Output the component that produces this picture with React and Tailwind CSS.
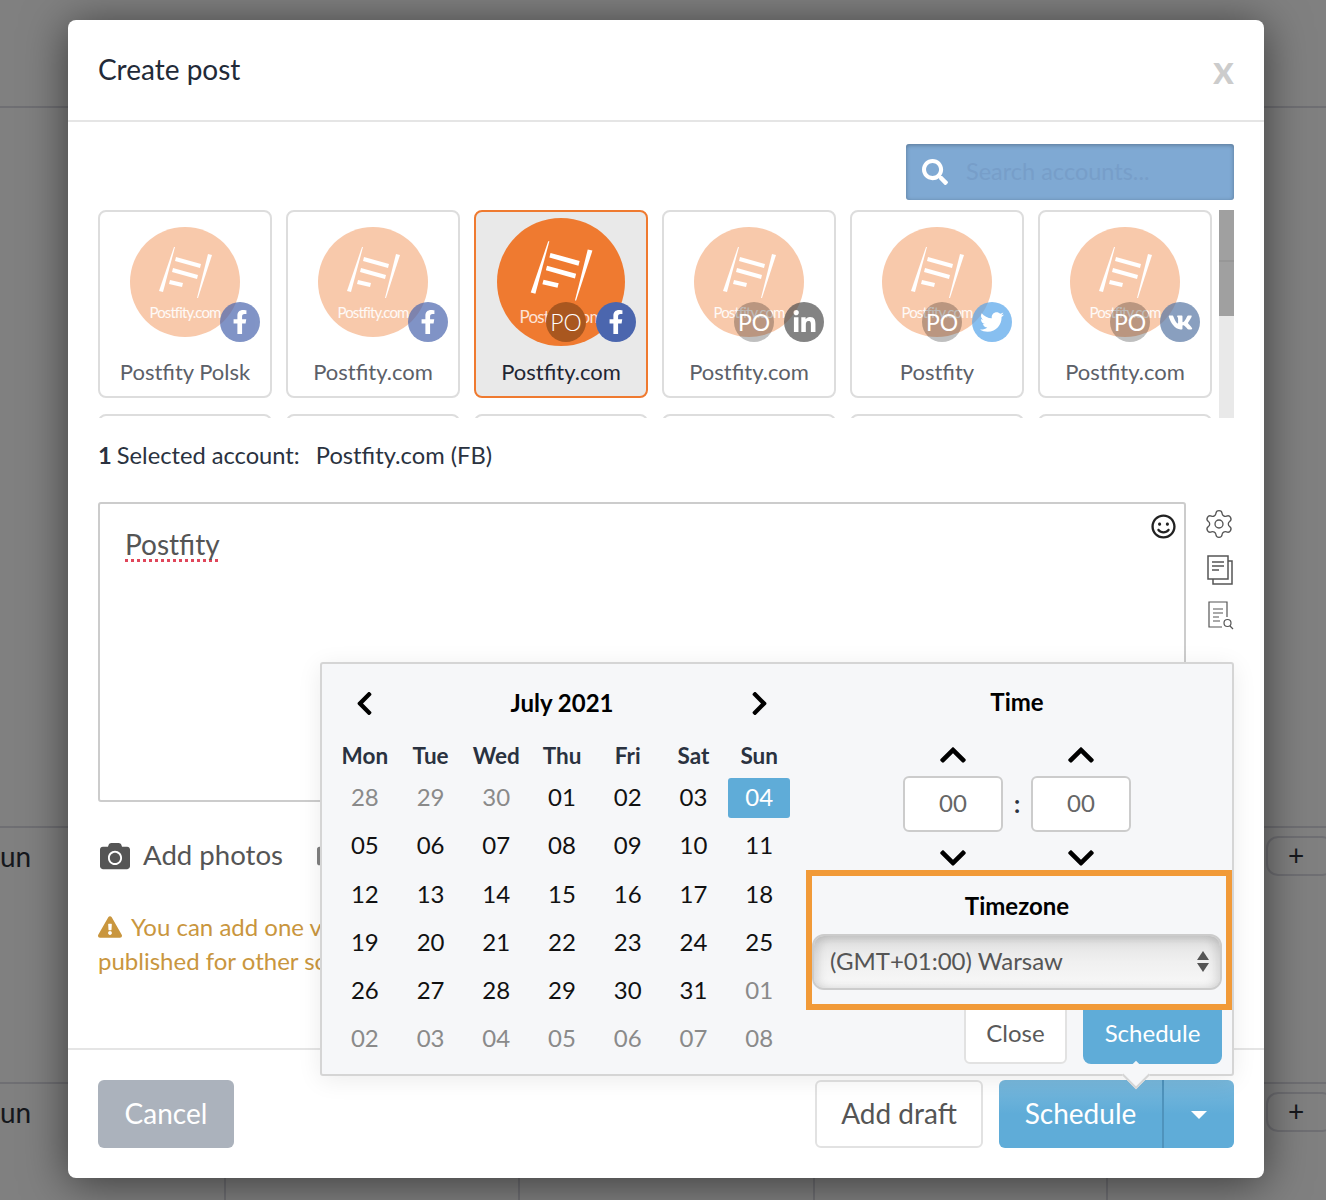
import { FaCamera, FaChevronDown, FaChevronLeft, FaChevronRight, FaChevronUp, FaExclamationTriangle, FaFacebookF, FaLinkedinIn, FaRegSmile, FaSearch, FaTwitter, FaVideo, FaVk } from "react-icons/fa";
import { Settings } from "lucide-react";

const accounts = [
  { name: "Postfity Polsk", net: "fb" },
  { name: "Postfity.com", net: "fb" },
  { name: "Postfity.com", net: "fb", po: true, selected: true },
  { name: "Postfity.com", net: "in", po: true },
  { name: "Postfity", net: "tw", po: true },
  { name: "Postfity.com", net: "vk", po: true },
];

const networks = {
  fb: { Icon: FaFacebookF, bg: "bg-[#4b66ae]", size: 24 },
  in: { Icon: FaLinkedinIn, bg: "bg-[#505050]", size: 25 },
  tw: { Icon: FaTwitter, bg: "bg-[#55a4ea]", size: 24 },
  vk: { Icon: FaVk, bg: "bg-[#5877a4]", size: 25 },
};

const weeks = [
  ["28", "29", "30", "01", "02", "03", "04"],
  ["05", "06", "07", "08", "09", "10", "11"],
  ["12", "13", "14", "15", "16", "17", "18"],
  ["19", "20", "21", "22", "23", "24", "25"],
  ["26", "27", "28", "29", "30", "31", "01"],
  ["02", "03", "04", "05", "06", "07", "08"],
];

const isMuted = (row, col) => (row === 0 && col < 3) || (row === 4 && col === 6) || row === 5;

const Ladder = () => (
  <svg viewBox="0 0 110 110" className="absolute inset-0 h-full w-full" fill="#fff">
    <polygon points="29,64 33,65 45,20 44,20" />
    <polygon points="67,71 68,71 82,28 78,27" />
    <polygon points="46,30 71,37 70,41 45,34" />
    <polygon points="43,41 68,48 67,52 42,45" />
    <polygon points="40,53 53,56 52,60 39,57" />
  </svg>
);

const Avatar = ({ selected }) => (
  <div className={selected ? "relative h-[128px] w-[128px] overflow-hidden rounded-full bg-[#ef7a30]" : "relative mt-[15px] h-[110px] w-[110px] overflow-hidden rounded-full bg-[#ef7a30] opacity-40"}>
    <Ladder />
    <span className={selected ? "absolute inset-x-0 top-[89px] text-center text-[17px] leading-5 tracking-[-0.8px] text-white/80" : "absolute inset-x-0 top-[75px] text-center text-[15px] leading-5 tracking-[-0.9px] text-white/90"}>
      Postfity.com
    </span>
  </div>
);

const AccountCard = ({ account }) => {
  const { Icon, bg, size } = networks[account.net];
  return (
    <div className={account.selected ? "flex h-[188px] w-[174px] flex-col items-center rounded-lg border-2 border-[#ef7a30] bg-[#e9e9e9]" : "flex h-[188px] w-[174px] flex-col items-center rounded-lg border-2 border-[#dddddd] bg-white"}>
      <div className={account.selected ? "relative flex h-[146px] w-full justify-center pt-[6px]" : "relative flex h-[146px] w-full justify-center"}>
        <Avatar selected={account.selected} />
        {account.po && (
          <span className={account.selected ? "absolute left-[70px] top-[90px] flex h-10 w-10 items-center justify-center rounded-full bg-[#a9571f] text-[23px] font-light text-white" : "absolute left-[70px] top-[90px] flex h-10 w-10 items-center justify-center rounded-full bg-black/25 text-[23px] text-white"}>
            PO
          </span>
        )}
        <span className={account.selected ? `absolute left-[120px] top-[90px] flex h-10 w-10 items-center justify-center rounded-full text-white ${bg}` : `absolute left-[120px] top-[90px] flex h-10 w-10 items-center justify-center rounded-full text-white opacity-70 ${bg}`}>
          <Icon size={size} />
        </span>
      </div>
      <div className={account.selected ? "text-[22px] leading-7 text-[#1f2633]" : "text-[22px] leading-7 text-[#5c6068]"}>{account.name}</div>
    </div>
  );
};

const BackdropRow = ({ height, text }) => (
  <div className={`flex border-t-2 border-[#6f6f73] ${height}`}>
    <div className="w-[226px] border-r-2 border-[#6f6f73] pt-[10px] text-[28px] leading-9 text-[#15171c]">{text}</div>
    <div className="w-[294px] border-r-2 border-[#6f6f73]" />
    <div className="w-[295px] border-r-2 border-[#6f6f73]" />
    <div className="w-[293px] border-r-2 border-[#6f6f73]" />
    <div className="flex flex-1 justify-end pt-[8px]">
      <div className="mr-[-8px] flex h-10 w-[68px] items-center justify-center rounded-xl border-2 border-[#6f6f73] pb-[2px] pr-[8px] text-[28px] text-[#15171c]">+</div>
    </div>
  </div>
);

const Calendar = () => (
  <div className="ml-[10px] w-[460px]">
    <div className="grid h-[78px] grid-cols-7 items-center text-black">
      <div className="flex justify-center"><FaChevronLeft size={27} /></div>
      <div className="col-span-5 text-center text-2xl font-bold">July 2021</div>
      <div className="flex justify-center"><FaChevronRight size={27} /></div>
    </div>
    <div className="grid h-8 grid-cols-7 items-start pt-px text-center text-[22.5px] font-bold leading-[26px] text-[#2a3240]">
      {["Mon", "Tue", "Wed", "Thu", "Fri", "Sat", "Sun"].map((day) => (
        <div key={day}>{day}</div>
      ))}
    </div>
    {weeks.map((week, row) => (
      <div key={row} className="grid h-[48.3px] grid-cols-7 items-start text-center text-2xl">
        {week.map((date, col) => (
          <div key={col} className={row === 0 && col === 6 ? "mx-auto mt-[4px] flex h-10 w-[62px] items-center justify-center rounded-[3px] bg-[#5facd8] pb-[2px] text-white" : isMuted(row, col) ? "mt-[4px] flex h-10 items-center justify-center pb-[2px] text-[#8a8a8a]" : "mt-[4px] flex h-10 items-center justify-center pb-[2px] text-[#111111]"}>
            {date}
          </div>
        ))}
      </div>
    ))}
  </div>
);

const TimeBox = () => (
  <div className="flex h-14 w-[100px] items-center justify-center rounded-md border-2 border-[#cccccc] bg-white pb-[2px] text-2xl text-[#666666]">00</div>
);

const TimePanel = () => (
  <div className="ml-[10px] flex w-[430px] shrink-0 flex-col">
    <div className="flex h-[76px] items-center justify-center pb-[1px] text-2xl font-bold text-black">Time</div>
    <div className="flex h-9 justify-center gap-7 pb-[7px] text-black">
      <div className="flex w-[100px] items-center justify-center"><FaChevronUp size={30} /></div>
      <div className="flex w-[100px] items-center justify-center"><FaChevronUp size={30} /></div>
    </div>
    <div className="flex justify-center">
      <TimeBox />
      <div className="flex w-7 items-center justify-center text-2xl font-bold text-[#2a3240]">:</div>
      <TimeBox />
    </div>
    <div className="flex h-[38px] justify-center gap-7 pt-[14px] text-black">
      <div className="flex w-[100px] items-center justify-center"><FaChevronDown size={30} /></div>
      <div className="flex w-[100px] items-center justify-center"><FaChevronDown size={30} /></div>
    </div>
    <div className="relative z-10 ml-1 h-[140px] w-[426px] border-[6px] border-[#f19a38] bg-[#f6f7f9]">
      <div className="flex h-[58px] items-center justify-center pr-1 pt-[2px] text-2xl font-bold text-black">Timezone</div>
      <div className="flex h-14 w-[410px] items-center justify-between rounded-xl border-2 border-[#cccccc] bg-gradient-to-b from-[#e0e0e0] via-[#f0f0f0] to-[#f8f8f8] pb-[2px] pl-4 pr-[11px] text-2xl text-[#555555] shadow-[inset_0_6px_10px_rgba(0,0,0,0.06),inset_6px_0_8px_rgba(0,0,0,0.08),inset_-6px_0_8px_rgba(0,0,0,0.08)]">
        <span>(GMT+01:00) Warsaw</span>
        <span className="flex flex-col gap-[3px]">
          <span className="h-0 w-0 border-x-[6px] border-b-[9px] border-x-transparent border-b-[#555555]" />
          <span className="h-0 w-0 border-x-[6px] border-t-[9px] border-x-transparent border-t-[#555555]" />
        </span>
      </div>
    </div>
    <div className="mt-[-6px] flex justify-end gap-4 pr-[10px]">
      <div className="flex h-[60px] w-[103px] items-center justify-center rounded-md border-2 border-[#e2e2e2] bg-white pb-[2px] text-2xl text-[#5a5a5a]">Close</div>
      <div className="flex h-[60px] w-[139px] items-center justify-center rounded-b-lg bg-[#5facd8] pb-[2px] text-2xl text-white">Schedule</div>
    </div>
  </div>
);

export default function App() {
  return (
    <div className="relative h-[1200px] w-[1326px] overflow-hidden bg-[#808080] font-['Lato',sans-serif]">
      <div className="h-[106px]" />
      <div className="h-[720px] border-t-2 border-[#6f6f73]" />
      <BackdropRow height="h-[256px]" text="un" />
      <BackdropRow height="h-[118px]" text="un" />

      <div className="absolute left-[68px] top-[20px] flex h-[1158px] w-[1196px] flex-col rounded-lg bg-white shadow-[0_5px_45px_rgba(0,0,0,0.55)]">
        <div className="flex h-[102px] shrink-0 items-center justify-between border-b-2 border-[#e5e5e5] px-[30px]">
          <h1 className="pb-[2px] text-[28px] text-[#222a38]">Create post</h1>
          <span className="mt-[-2px] text-[40px] font-bold leading-none text-[#cccccc]">x</span>
        </div>

        <div className="px-[30px]">
          <div className="mt-[22px] flex justify-end">
            <div className="flex h-14 w-[328px] items-center gap-[18px] rounded-[3px] bg-[#7fa9d3] pl-[16px] text-white shadow-[inset_0_1px_4px_rgba(0,0,0,0.3)]">
              <FaSearch size={26} />
              <input placeholder="Search accounts..." className="w-[260px] bg-transparent text-[23.5px] outline-none placeholder:text-[#779ec9]" />
            </div>
          </div>

          <div className="mt-[10px] flex h-[208px] justify-between">
            <div className="grid h-[208px] w-[1114px] grid-cols-6 gap-x-[14px] gap-y-4 overflow-hidden">
              {[...accounts, ...accounts].map((account, i) => (
                <AccountCard key={i} account={i < 6 ? account : { ...account, selected: false }} />
              ))}
            </div>
            <div className="w-[15px] bg-[#e9e9e9]">
              <div className="h-[106px] bg-[#a0a0a0]">
                <div className="h-[52px] border-b-2 border-[#979797]" />
              </div>
            </div>
          </div>

          <div className="mt-5 flex h-9 items-center whitespace-nowrap text-[23.7px] text-[#2a3240]">
            <span className="font-bold">1</span>
            <span className="ml-[5px]">Selected account:</span>
            <span className="ml-4">Postfity.com (FB)</span>
          </div>

          <div className="mt-7 flex">
            <div className="flex h-[300px] w-[1088px] justify-between rounded-[3px] border-2 border-[#cccccc] pl-[25px] pr-[8px] pt-[20px]">
              <span className="text-[28px] leading-10 text-[#555555] underline decoration-[#e0465a] decoration-dotted decoration-[3px] underline-offset-[4px] [text-decoration-skip-ink:none]">Postfity</span>
              <FaRegSmile size={25} className="mt-[-10px] text-[#222222]" />
            </div>
            <div className="flex flex-1 flex-col items-end pt-[6px] text-[#555555]">
              <Settings size={32} strokeWidth={1} className="mr-[-1px]" />
              <svg viewBox="0 0 28 30" className="mt-[15px] h-[30px] w-7" fill="none" stroke="#555555" strokeWidth="1.5">
                <rect x="2" y="1" width="20" height="23" />
                <path d="M22 6h4v23H7v-5M6 7h12M6 11h12M6 15h7" />
              </svg>
              <svg viewBox="0 0 28 30" className="mt-[15px] h-[30px] w-7" fill="none" stroke="#555555" strokeWidth="1.2">
                <path d="M21 17V2H3v25h13M7 9h10M7 13h10M7 17h6M7 21h7" />
                <circle cx="21.5" cy="23" r="3.5" />
                <path d="M24 26l3 3" />
              </svg>
            </div>
          </div>

          <div className="mt-[38px] flex h-8 items-center whitespace-nowrap text-[27.6px] text-[#555555]">
            <FaCamera size={30} className="ml-[2px]" />
            <span className="ml-[13px] pb-[2px]">Add photos</span>
            <FaVideo size={28} className="ml-[34px] text-[#808080]" />
          </div>

          <div className="mt-[38px] whitespace-nowrap text-2xl leading-[34px] text-[#c9963e]">
            <div className="flex items-center">
              <FaExclamationTriangle size={24} />
              <span className="ml-[9px]">You can add one video</span>
            </div>
            <div>published for other social</div>
          </div>
        </div>

        <div className="absolute inset-x-0 bottom-[128px] border-t-2 border-[#e5e5e5]" />

        <div className="mb-[30px] mt-auto flex h-[68px] items-center justify-between px-[30px]">
          <div className="flex h-[68px] w-[136px] items-center justify-center rounded-md bg-[#abb2bc] pb-[2px] text-[28px] text-white">Cancel</div>
          <div className="flex gap-4">
            <div className="flex h-[68px] w-[168px] items-center justify-center rounded-md border-2 border-[#e2e2e2] pb-[2px] text-[28px] text-[#555555]">Add draft</div>
            <div className="flex h-[68px] w-[235px] rounded-md bg-gradient-to-b from-[#78b8dc] via-[#5facd8] to-[#5facd8] text-white">
              <div className="flex w-[165px] items-center justify-center border-r-2 border-[#4f93bc] pb-[2px] text-[28px]">Schedule</div>
              <div className="flex flex-1 items-center justify-center">
                <span className="mt-[2px] h-0 w-0 border-x-[8px] border-t-[8px] border-x-transparent border-t-white" />
              </div>
            </div>
          </div>
        </div>

        <div className="absolute left-[252px] top-[642px] z-20 flex h-[414px] w-[914px] rounded-[3px] border-2 border-[#d5d5d5] bg-[#f6f7f9] shadow-[0_4px_24px_rgba(0,0,0,0.08)]">
          <Calendar />
          <TimePanel />
          <div className="absolute bottom-[-11px] left-[804px] h-5 w-5 rotate-45 border-b-2 border-r-2 border-[#d5d5d5] bg-[#f6f7f9]" />
        </div>
      </div>
    </div>
  );
}
